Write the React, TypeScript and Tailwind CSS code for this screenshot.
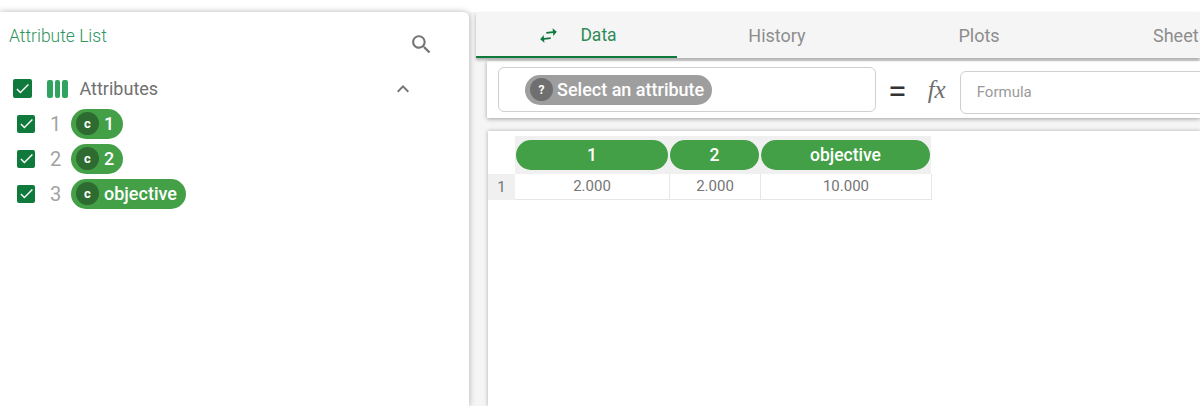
import React from 'react';

const font = { fontFamily: 'Roboto, sans-serif' };

const MaterialIcon = ({ d, size, className }: { d: string; size: number; className?: string }) => (
  <svg width={size} height={size} viewBox="0 0 24 24" fill="currentColor" className={className}>
    <path d={d} />
  </svg>
);

const CHECK = 'M9 16.17L4.83 12l-1.42 1.41L9 19 21 7l-1.41-1.41z';
const SEARCH = 'M15.5 14h-.79l-.28-.27C15.41 12.59 16 11.11 16 9.5 16 5.91 13.09 3 9.5 3S3 5.91 3 9.5 5.91 16 9.5 16c1.61 0 3.09-.59 4.23-1.57l.27.28v.79l5 4.99L20.49 19l-4.99-5zm-6 0C7.01 14 5 11.99 5 9.5S7.01 5 9.5 5 14 7.01 14 9.5 11.99 14 9.5 14z';
const CHEVRON = 'M12 8l-6 6 1.41 1.41L12 10.83l4.59 4.58L18 14z';
const SWAP = 'M6.99 11L3 15l3.99 4v-3H14v-2H6.99v-3zM21 9l-3.99-4v3H10v2h7.01v3L21 9z';

const Box = ({ size }: { size: string }) => (
  <span className={`${size} flex items-center justify-center rounded-[2px] bg-[#0f7a3c] text-white`}>
    <MaterialIcon d={CHECK} size={17} />
  </span>
);

const AttrRow = ({ n, name }: { n: number; name: string }) => (
  <div className="flex h-[35px] items-center">
    <div className="ml-[17px] w-[18px]"><Box size="h-[18px] w-[18px]" /></div>
    <span className="ml-[15px] w-[21px] text-[20px] leading-none text-[#a3a3a3]">{n}</span>
    <span className="flex h-[30px] items-center rounded-full bg-[#43a047] pl-[5px] pr-[9px] text-[18px] font-medium text-white">
      <span className="mr-[5px] flex h-[23px] w-[23px] shrink-0 items-center justify-center rounded-full bg-[#2e6b30] text-[13px] font-bold">c</span>
      {name}
    </span>
  </div>
);

const Tab = ({ label, className }: { label: string; className: string }) => (
  <div className={`flex items-center justify-center text-[18px] text-[#8d8d8d] ${className}`}>{label}</div>
);

const HeaderCell = ({ label, width }: { label: string; width: string }) => (
  <div className={`${width} flex h-[38px] items-center bg-[#f0f0f0] px-[1px]`}>
    <div className="flex h-[30px] w-full items-center justify-center rounded-full bg-[#43a047] text-[17.5px] font-medium text-white">{label}</div>
  </div>
);

const DataCell = ({ value, width }: { value: string; width: string }) => (
  <div className={`${width} flex h-[26px] items-center justify-center border-r border-b border-[#e6e6e6] text-[15px] text-[#757575]`}>{value}</div>
);

export default function App() {
  return (
    <div className="h-[406px] w-[1200px] overflow-hidden bg-white" style={font}>
      <div className="h-[12px] bg-white" />
      <div className="flex h-[394px]">
        <aside className="relative z-10 w-[469px] shrink-0 rounded-tr-[6px] bg-white shadow-[0_0_6px_rgba(0,0,0,0.3)]">
          <div className="flex h-[62px] items-start justify-between pl-[9px] pr-[35px]">
            <span className="mt-[11px] text-[17.5px] font-light text-[#2f9560]">Attribute List</span>
            <MaterialIcon d={SEARCH} size={25} className="mt-[20px] text-[#757575]" />
          </div>
          <div className="flex h-[28px] items-center pl-[13px] pr-[54px] pt-[1px]">
            <Box size="h-[19px] w-[19px]" />
            <span className="ml-[15px] flex gap-[2px]">
              <span className="h-[18px] w-[5.5px] rounded-[2px] bg-[#2fa35f]" />
              <span className="h-[18px] w-[5.5px] rounded-[2px] bg-[#2fa35f]" />
              <span className="h-[18px] w-[5.5px] rounded-[2px] bg-[#2fa35f]" />
            </span>
            <span className="ml-[12px] text-[18px] text-[#707070]">Attributes</span>
            <span className="ml-auto text-[#757575]"><MaterialIcon d={CHEVRON} size={24} /></span>
          </div>
          <div className="mt-[4px]">
            <AttrRow n={1} name="1" />
            <AttrRow n={2} name="2" />
            <AttrRow n={3} name="objective" />
          </div>
        </aside>

        <main className="flex min-w-0 flex-1 flex-col bg-[#f5f5f5]">
          <div className="relative z-[2] ml-[7px] flex h-[46px] shrink-0 overflow-hidden bg-[#f5f5f5] shadow-[0_2px_3px_rgba(0,0,0,0.3)]">
            <div className="flex w-[201px] shrink-0 items-center justify-center gap-[20px] border-b-[2px] border-[#0f7a3c] pl-[1px] pt-[2px] text-[17.5px] text-[#2e8b57]">
              <MaterialIcon d={SWAP} size={23} className="text-[#0f7a3c] -rotate-6" />
              Data
            </div>
            <Tab label="History" className="w-[200px] shrink-0" />
            <Tab label="Plots" className="w-[204px] shrink-0" />
            <div className="flex flex-1 items-center pl-[72px] text-[18px] text-[#8d8d8d] whitespace-nowrap">Sheet</div>
          </div>

          <div className="relative z-[1] ml-[18px] mt-[3px] flex h-[57px] shrink-0 items-center overflow-hidden bg-white pl-[11px] shadow-[0_1px_4px_rgba(0,0,0,0.35)]">
            <div className="mb-[1px] flex h-[45px] w-[378px] shrink-0 items-center rounded-[6px] border border-[#cfcfcf] pl-[26px]">
              <span className="mt-[1px] flex h-[30px] items-center rounded-full bg-[#9e9e9e] pl-[5px] pr-[8px] text-[18px] font-medium text-white">
                <span className="mr-[4px] flex h-[23px] w-[23px] shrink-0 items-center justify-center rounded-full bg-[#6f6f6f] text-[12px] font-bold">?</span>
                Select an attribute
              </span>
            </div>
            <span className="ml-[12px] mt-[2px] text-[34px] leading-none text-[#333]">=</span>
            <span className="ml-[21px] text-[25px] italic leading-none text-[#6e6e6e]" style={{ fontFamily: '"Liberation Serif", serif' }}>fx</span>
            <div className="ml-[14px] mt-[6px] flex h-[43px] w-[300px] shrink-0 items-center rounded-[6px] border border-[#cfcfcf] pl-[16px] text-[15px] text-[#9a9a9a]">Formula</div>
          </div>

          <section className="ml-[19px] mt-[13px] flex-1 bg-white shadow-[0_0_4px_rgba(0,0,0,0.3)]">
            <div className="flex pl-[27px] pt-[5px]">
              <HeaderCell label="1" width="w-[154px]" />
              <HeaderCell label="2" width="w-[91px]" />
              <HeaderCell label="objective" width="w-[171px]" />
            </div>
            <div className="flex">
              <div className="flex h-[26px] w-[27px] items-center justify-center bg-[#f0f0f0] text-[15px] text-[#757575]">1</div>
              <DataCell value="2.000" width="w-[155px]" />
              <DataCell value="2.000" width="w-[91px]" />
              <DataCell value="10.000" width="w-[171px]" />
            </div>
          </section>
        </main>
      </div>
    </div>
  );
}
